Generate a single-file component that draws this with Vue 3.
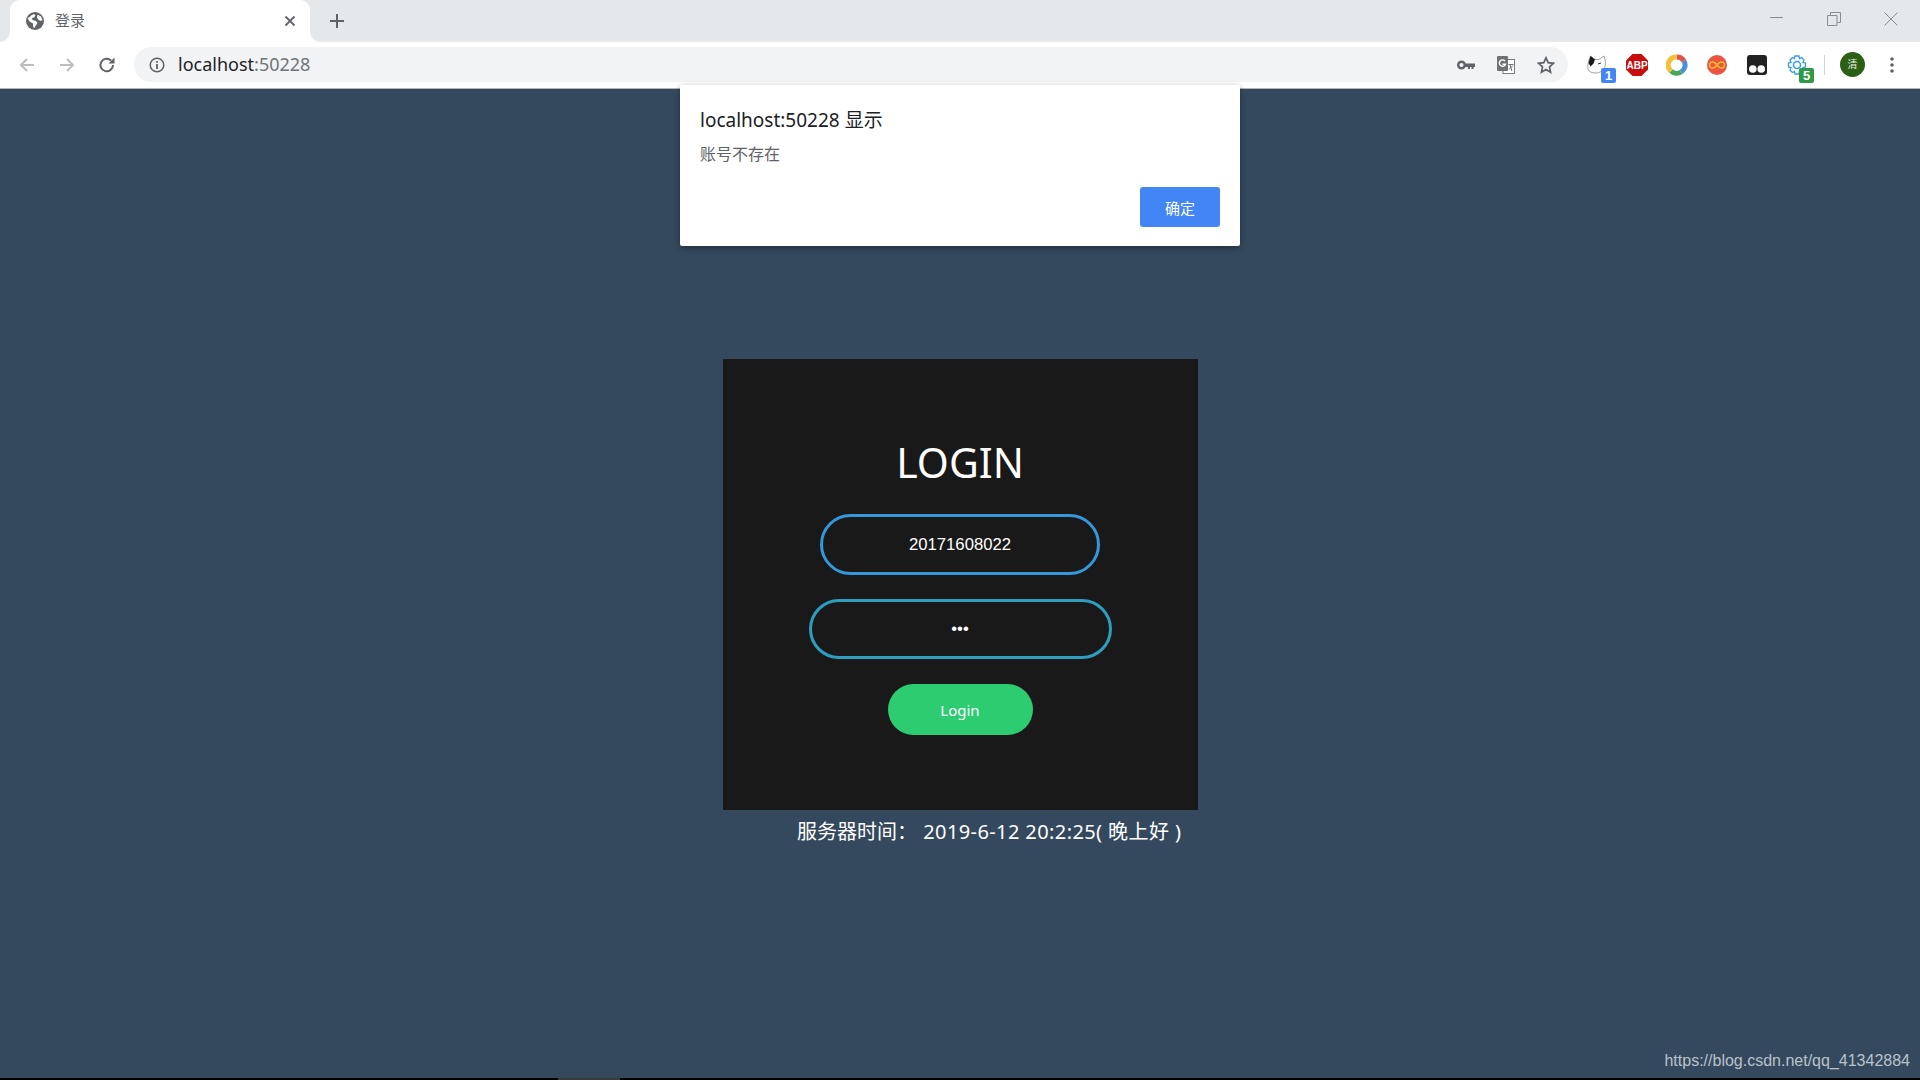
<template>
  <div class="page">
    <div class="browser-top">
      <div class="tab-strip">
        <div class="tab">
          <svg class="globe" viewBox="0 0 18 18" width="18" height="18">
            <circle cx="9" cy="9" r="9" fill="#5f6368" />
            <path d="M1.500 6c1.500-.5 2.500-1 3.500-2.500L8 2l1.500 1.500L8 5.500 6 6l.5 2 3.500 1 1.500 2-2 3-1.500 2.500L7 14v-2.500L3.500 9.500z" fill="#fff" />
            <path d="M11.500 2.500l3.500 2 1.500 3.500-1.500 1-2.500-1-1.500-2.500z" fill="#fff" />
          </svg>
          <span class="tab-title">登录</span>
          <svg class="tab-close" viewBox="0 0 12 12" width="12" height="12">
            <path d="M1.500 1.500l9 9M10.500 1.500l-9 9" stroke="#5f6368" stroke-width="1.800" fill="none" />
          </svg>
        </div>
        <svg class="new-tab" viewBox="0 0 16 16" width="16" height="16">
          <path d="M8 1v14M1 8h14" stroke="#5f6368" stroke-width="2" fill="none" />
        </svg>
        <div class="window-btns">
          <svg viewBox="0 0 14 14" width="14" height="14"><path d="M0 5.500h13" stroke="#8a8c8e" stroke-width="1" fill="none" /></svg>
          <svg viewBox="0 0 14 14" width="14" height="14">
            <path d="M.5 3.500h9.500v10h-9.500zM3.500 3V.5h10v10H10.500" stroke="#8a8c8e" stroke-width="1" fill="none" />
          </svg>
          <svg viewBox="0 0 14 14" width="14" height="14"><path d="M.5.5l13 13M13.500.5l-13 13" stroke="#8a8c8e" stroke-width="1" fill="none" /></svg>
        </div>
      </div>
      <div class="toolbar">
        <svg class="nav-icon" viewBox="0 0 18 18" width="18" height="18">
          <path d="M16 9H3M9 3L3 9l6 6" stroke="#bcbec0" stroke-width="2" fill="none" />
        </svg>
        <svg class="nav-icon" viewBox="0 0 18 18" width="18" height="18">
          <path d="M2 9h13M9 3l6 6-6 6" stroke="#bcbec0" stroke-width="2" fill="none" />
        </svg>
        <svg class="nav-icon" viewBox="0 0 18 18" width="18" height="18">
          <path d="M15 9a6.300 6.300 0 1 1-1.900-4.500" stroke="#5f6368" stroke-width="2" fill="none" />
          <path d="M16.500 1.500v6h-6z" fill="#5f6368" />
        </svg>
        <div class="omnibox">
          <svg class="info" viewBox="0 0 16 16" width="16" height="16">
            <circle cx="8" cy="8" r="6.800" stroke="#5f6368" stroke-width="1.500" fill="none" />
            <path d="M8 7v5" stroke="#5f6368" stroke-width="1.800" />
            <path d="M8 4v1.800" stroke="#5f6368" stroke-width="1.800" />
          </svg>
          <span class="url">localhost<span class="port">:50228</span></span>
          <div class="omni-icons">
            <svg viewBox="0 0 18 10" width="18" height="10">
              <circle cx="4.500" cy="5" r="3.300" stroke="#5f6368" stroke-width="2.400" fill="none" />
              <path d="M8 3.500h10v3.500h-1.500v2h-2V7h-1.500v2h-2V7H8z" fill="#5f6368" />
            </svg>
            <svg viewBox="0 0 18 18" width="18" height="18">
              <rect x="6" y="3.500" width="11.500" height="14" fill="#fff" stroke="#7a7d80" stroke-width="1" />
              <rect x="0" y="0" width="11" height="15" rx="1" fill="#6e7175" />
              <path d="M8 5A3.200 3.200 0 1 0 8.500 8.200H5.500" stroke="#fff" stroke-width="1.400" fill="none" />
              <path d="M11.500 8.500h5M13 8l1.800 7M16 9.500l-4 4" stroke="#6e7175" stroke-width="1" fill="none" />
            </svg>
            <svg viewBox="0 0 18 18" width="18" height="18">
              <path d="M9 1.800l2.200 4.900 5.300.6-4 3.600 1.100 5.300L9 13.500l-4.600 2.700 1.100-5.300-4-3.600 5.300-.6z" stroke="#5f6368" stroke-width="1.700" fill="none" />
            </svg>
          </div>
        </div>
        <div class="extensions">
          <div class="ext">
            <svg viewBox="0 0 20 20" width="20" height="20">
              <path d="M1 14C0 9 2 5 3.500 1L8 4.500h4L17 1c1.500 4 2 7 1 10-1 4-5 7-9 7-4 0-7-1-8-4z" fill="#fff" stroke="#8a8a8a" stroke-width=".8" />
              <path d="M3.500 1L1.500 8l2 3.500 3-3L8 4.500z" fill="#1a1a1a" />
              <path d="M11 9l3-1" stroke="#333" stroke-width="1" />
            </svg>
            <span class="badge badge-blue">1</span>
          </div>
          <div class="ext">
            <svg viewBox="0 0 22 22" width="22" height="22">
              <path d="M6.500 0h9L22 6.500v9L15.500 22h-9L0 15.500v-9z" fill="#c70d0d" />
              <text x="11" y="15" text-anchor="middle" class="abp">ABP</text>
            </svg>
          </div>
          <div class="ext">
            <svg viewBox="0 0 22 22" width="22" height="22">
              <path d="M11 3a8 8 0 0 1 7 4" stroke="#e0574a" stroke-width="5" fill="none" />
              <path d="M18 7a8 8 0 0 1-3 11" stroke="#4a90d9" stroke-width="5" fill="none" />
              <path d="M15 18a8 8 0 0 1-10-1" stroke="#45a856" stroke-width="5" fill="none" />
              <path d="M5 17a8 8 0 0 1 6-14" stroke="#f3c03a" stroke-width="5" fill="none" />
            </svg>
          </div>
          <div class="ext">
            <svg viewBox="0 0 20 20" width="20" height="20">
              <circle cx="10" cy="10" r="10" fill="#ea5440" />
              <path d="M10 10c-2-3-3-3-4.500-3a3 3 0 0 0 0 6c1.500 0 2.500 0 4.500-3s3-3 4.500-3a3 3 0 0 1 0 6c-1.500 0-2.500 0-4.500-3z" stroke="#f9c02c" stroke-width="1.400" fill="none" />
            </svg>
          </div>
          <div class="ext">
            <svg viewBox="0 0 20 20" width="20" height="20">
              <rect width="20" height="20" rx="3" fill="#222" />
              <circle cx="5.800" cy="14" r="3.800" fill="#fff" />
              <circle cx="14.200" cy="14" r="3.800" fill="#fff" />
            </svg>
          </div>
          <div class="ext">
            <svg viewBox="0 0 20 20" width="20" height="20">
              <circle cx="10" cy="10" r="3.500" stroke="#2f9ee8" stroke-width="1.500" fill="none" />
              <path d="M8 1h4l.5 2.500 2-1 2.500 2.500-1 2.300 2.500.7v4l-2.500.7 1 2.300-2.500 2.500-2-1L12 19H8l-.5-2.500-2 1L3 15l1-2.300-2.500-.7V8L4 7.300 3 5l2.500-2.500 2 1z" stroke="#2f9ee8" stroke-width="1.300" fill="none" />
            </svg>
            <span class="badge badge-green">5</span>
          </div>
        </div>
        <div class="divider"></div>
        <div class="avatar">清</div>
        <svg class="menu" viewBox="0 0 4 16" width="4" height="16">
          <circle cx="2" cy="2" r="1.800" fill="#5f6368" />
          <circle cx="2" cy="8" r="1.800" fill="#5f6368" />
          <circle cx="2" cy="14" r="1.800" fill="#5f6368" />
        </svg>
      </div>
    </div>

    <div class="content">
      <div class="login-box">
        <h1 class="login-title">LOGIN</h1>
        <input class="field field-user" type="text" value="20171608022" />
        <input class="field field-pass" type="password" value="123" />
        <button class="login-btn">Login</button>
      </div>
      <div class="server-time">服务器时间：&nbsp;<span class="server-date">2019-6-12 20:2:25( 晚上好 )</span></div>
      <div class="watermark">https://blog.csdn.net/qq_41342884</div>
      <div class="alert">
        <div class="alert-title">localhost:50228 显示</div>
        <div class="alert-msg">账号不存在</div>
        <div class="alert-actions"><button class="alert-ok">确定</button></div>
      </div>
    </div>
    <div class="bottom-strip"><span class="bottom-piece"></span></div>
  </div>
</template>

<script setup>
</script>

<style>
html, body {
  margin: 0;
  overflow: hidden;
}
</style>

<style scoped>
.page {
  width: 1920px;
  height: 1080px;
  display: flex;
  flex-direction: column;
  font-family: "Noto Sans", "Noto Sans CJK SC", sans-serif;
  background: #34495e;
  overflow: hidden;
}
.browser-top {
  flex: none;
  height: 88px;
  border-bottom: 1px solid #b5b6b7;
}
.tab-strip {
  height: 42px;
  background: #e5e8eb;
  display: flex;
  align-items: flex-end;
}
.tab {
  position: relative;
  width: 300px;
  height: 42px;
  margin-left: 10px;
  background: #fff;
  border-radius: 10px 10px 0 0;
  display: flex;
  align-items: center;
  box-sizing: border-box;
  padding: 0 14px 0 16px;
}
/* flared bottom corners of the active tab */
.tab::before,
.tab::after {
  content: "";
  position: absolute;
  bottom: 0;
  width: 10px;
  height: 10px;
}
.tab::before {
  left: -10px;
  background: radial-gradient(circle at 0 0, #e5e8eb 9.500px, #fff 10px);
}
.tab::after {
  right: -10px;
  background: radial-gradient(circle at 100% 0, #e5e8eb 9.500px, #fff 10px);
}
.globe {
  flex: none;
}
.tab-title {
  margin-left: 11px;
  font-size: 15px;
  line-height: 20px;
  margin-top: -2px;
  color: #5f6368;
  flex: 1;
}
.tab-close {
  flex: none;
}
.new-tab {
  margin: 0 0 13px 19px;
}
.window-btns {
  margin-left: auto;
  align-self: flex-start;
  display: flex;
  gap: 43px;
  padding: 12px 22px 0 0;
}
.toolbar {
  height: 46px;
  background: #fff;
  display: flex;
  align-items: center;
  padding-bottom: 1px;
  box-sizing: border-box;
}
.nav-icon {
  flex: none;
  margin-left: 22px;
}
.nav-icon:first-child {
  margin-left: 18px;
}
.omnibox {
  width: 1434px;
  height: 35px;
  margin-left: 18px;
  flex: none;
  background: #f1f3f4;
  border-radius: 18px;
  display: flex;
  align-items: center;
  box-sizing: border-box;
  padding: 0 13px 0 15px;
}
.url {
  margin-left: 13px;
  margin-top: -2px;
  font-size: 18px;
  color: #1f2124;
}
.port {
  color: #6f7479;
}
.omni-icons {
  margin-left: auto;
  display: flex;
  align-items: center;
  gap: 22px;
}
.extensions {
  display: flex;
  align-items: center;
  gap: 18px;
  margin-left: 18px;
}
.ext {
  position: relative;
  width: 22px;
  height: 22px;
  display: flex;
  align-items: center;
  justify-content: center;
}
.badge {
  position: absolute;
  right: -8px;
  bottom: -7px;
  width: 15px;
  height: 15px;
  border-radius: 2px;
  color: #fff;
  font-size: 13px;
  line-height: 15px;
  text-align: center;
  font-family: "Liberation Sans", sans-serif;
  font-weight: 700;
}
.badge-blue {
  background: #4285f4;
}
.badge-green {
  background: #2e9a45;
  right: -6px;
}
.abp {
  font-family: "Liberation Sans", sans-serif;
  font-weight: 700;
  font-size: 10px;
  fill: #fff;
}
.divider {
  width: 1px;
  height: 20px;
  background: #d3d5d7;
  margin-left: 16px;
}
.avatar {
  width: 25px;
  height: 25px;
  margin-left: 15px;
  border-radius: 50%;
  background: #2c5f16;
  color: #e8efe4;
  font-size: 10px;
  line-height: 25px;
  text-align: center;
}
.menu {
  margin-left: 25px;
}
.content {
  position: relative;
  flex: 1;
  display: flex;
  flex-direction: column;
  align-items: center;
  padding-top: 270px;
}
.login-box {
  width: 475px;
  height: 451px;
  background: #191919;
  display: flex;
  flex-direction: column;
  align-items: center;
  padding-top: 75px;
  box-sizing: border-box;
}
.login-title {
  margin: 0;
  font-size: 41px;
  font-weight: 400;
  line-height: 56px;
  color: #fff;
}
.field {
  display: block;
  box-sizing: border-box;
  border-radius: 31px;
  background: transparent;
  text-align: center;
  color: #fff;
  outline: none;
  font-family: "Liberation Sans", sans-serif;
  font-size: 16.700px;
}
.field-user {
  width: 280px;
  height: 61px;
  margin-top: 24px;
  border: 3px solid #3498db;
}
.field-pass {
  width: 303px;
  height: 60px;
  margin-top: 24px;
  border: 3px solid #2e9ec0;
}
.login-btn {
  margin-top: 25px;
  width: 145px;
  height: 51px;
  border: none;
  border-radius: 26px;
  background: #2ecc71;
  color: #fff;
  font-family: "Noto Sans", sans-serif;
  font-size: 15px;
}
.server-time {
  margin-top: 9px;
  margin-left: 89px;
  width: 415px;
  font-size: 20px;
  line-height: 26px;
  color: #fff;
  white-space: nowrap;
}
.server-date {
  margin-left: 1px;
  letter-spacing: 0.400px;
}
.watermark {
  position: absolute;
  right: 10px;
  bottom: 8px;
  font-family: "Liberation Sans", sans-serif;
  font-size: 16px;
  color: #b9c2ca;
}
.alert {
  position: absolute;
  top: -4px;
  left: 680px;
  width: 560px;
  height: 161px;
  box-sizing: border-box;
  background: #fff;
  border-radius: 2px;
  box-shadow: 0 2px 6px rgba(0, 0, 0, 0.4);
  padding: 22px 20px 19px;
  display: flex;
  flex-direction: column;
}
.alert-title {
  font-size: 19px;
  line-height: 26px;
  color: #202124;
}
.alert-msg {
  margin-top: 11px;
  font-size: 16px;
  line-height: 20px;
  color: #5f6368;
}
.alert-actions {
  margin-top: auto;
  display: flex;
  justify-content: flex-end;
}
.alert-ok {
  width: 80px;
  height: 40px;
  border: none;
  border-radius: 3px;
  background: #4285f4;
  color: #fff;
  font-family: "Noto Sans CJK SC", sans-serif;
  font-size: 15px;
}
.bottom-strip {
  flex: none;
  height: 2px;
  background: #000;
  position: relative;
}
.bottom-piece {
  position: absolute;
  left: 558px;
  top: 0;
  width: 62px;
  height: 2px;
  background: #3a3a3a;
}
</style>
